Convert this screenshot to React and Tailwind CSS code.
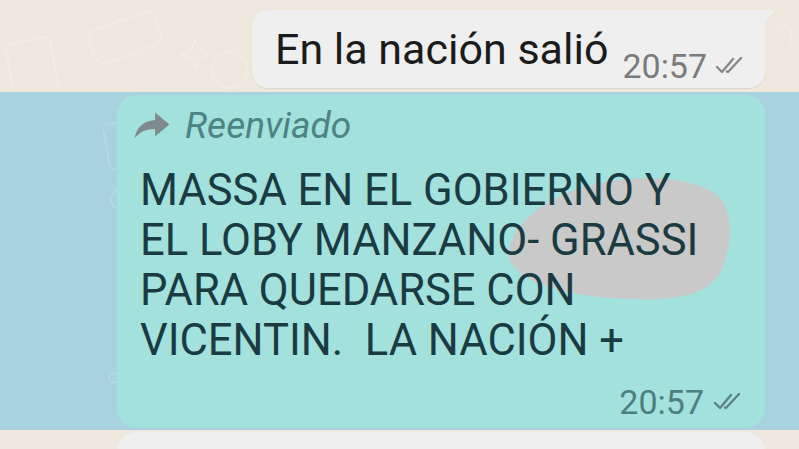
import React from 'react';

const Ticks = ({ className }) => (
  <svg viewBox="0 0 32 20" className={className} fill="none" stroke="currentColor" strokeWidth="2.4" strokeLinecap="round" strokeLinejoin="round">
    <path d="M2 11 L7 16 L18 3" />
    <path d="M12 15.5 L13 16 L26 2" />
  </svg>
);

const ForwardIcon = ({ className }) => (
  <svg viewBox="0 0 24 24" className={className} fill="currentColor">
    <path d="M14 8.2V3.5l9 7.5-9 7.5v-4.6c-5.6 0-9.4 1.7-13 5.6 1.2-6 5-10.7 13-11.3z" />
  </svg>
);

const Doodles = () => (
  <svg className="absolute inset-0 w-full h-full pointer-events-none" viewBox="0 0 799 449" fill="none" stroke="#ffffff" strokeOpacity="0.22" strokeWidth="1.5">
    <rect x="10" y="40" width="45" height="60" rx="6" transform="rotate(-10 32 70)" />
    <rect x="90" y="20" width="70" height="35" rx="10" transform="rotate(-20 125 37)" />
    <path d="M195 40 l4 10 l10 4 l-10 4 l-4 10 l-4 -10 l-10 -4 l10 -4 z" />
    <circle cx="230" cy="70" r="18" />
    <ellipse cx="60" cy="135" rx="45" ry="22" transform="rotate(-15 60 135)" />
    <circle cx="95" cy="165" r="5" />
    <circle cx="62" cy="190" r="4" />
    <rect x="30" y="210" width="65" height="45" rx="8" transform="rotate(-20 62 232)" />
    <circle cx="45" cy="275" r="4" />
    <circle cx="70" cy="300" r="5" />
    <path d="M55 340 c-8 -10 -20 -2 -12 8 l12 12 l12 -12 c8 -10 -4 -18 -12 -8 z" />
    <circle cx="20" cy="380" r="6" />
    <path d="M780 120 c-10 20 -10 60 0 80" />
    <circle cx="785" cy="320" r="8" />
    <path d="M775 30 c10 -10 20 0 15 15" />
  </svg>
);

export default function App() {
  return (
    <div className="relative w-[799px] h-[449px] overflow-hidden bg-[#efe7dd] font-['Roboto','Liberation_Sans',sans-serif]">
      <Doodles />

      {/* outgoing text bubble */}
      <div className="relative h-[92px] pt-[10px]">
        <div className="relative ml-[252px] w-[513px] h-[78px] bg-[#efefef] rounded-[16px] rounded-tr-none pl-[23px] pr-[20px] flex shadow-[0_1px_1px_rgba(0,0,0,0.08)]">
          <span className="mt-[14px] text-[43px] leading-[50px] text-[#1b1b1b] whitespace-nowrap">En la nación salió</span>
          <div className="ml-[14px] mt-[37px] flex items-center h-[38px]">
            <span className="text-[34px] leading-[38px] text-[#7b7b7b]">20:57</span>
            <Ticks className="ml-[8px] w-[32px] h-[20px] text-[#8a8a8a]" />
          </div>
          <svg className="absolute top-0 right-[-10px] w-[12px] h-[14px]" viewBox="0 0 12 14">
            <path d="M0 0 H12 L0 14 Z" fill="#efefef" />
          </svg>
        </div>
      </div>

      {/* selected forwarded message */}
      <div className="relative h-[338px] bg-[#a8d2df] pt-[3px]">
        <Doodles />
        <div className="relative ml-[117px] w-[648px] h-[333px] bg-[#a3e1dc] rounded-[20px] pl-[23px] pr-[20px] pt-[11px] pb-[10px] flex flex-col">
          <svg className="absolute left-0 top-0 w-full h-full" viewBox="0 0 648 333">
            <path
              d="M392 155 C398 122 440 96 483 88 C522 80 572 80 600 100 C618 116 616 152 602 180 C586 202 552 206 515 204 C480 203 450 199 420 188 C400 178 390 168 392 155 Z"
              fill="#c9c9c9"
            />
          </svg>
          <div className="relative flex items-center h-[40px]">
            <ForwardIcon className="w-[38px] h-[38px] text-[#7f8b8b] -ml-[7px]" />
            <span className="ml-[14px] text-[37px] leading-[40px] italic text-[#4e8383]">Reenviado</span>
          </div>
          <p className="relative mt-[20px] text-[43.5px] leading-[50px] text-[#1a3b42] whitespace-nowrap">
            MASSA EN EL GOBIERNO Y<br />
            EL LOBY MANZANO- GRASSI<br />
            PARA QUEDARSE CON<br />
            VICENTIN.&nbsp; LA NACIÓN +
          </p>
          <div className="relative mt-auto flex items-center justify-end h-[32px]">
            <span className="text-[34px] leading-[32px] text-[#4d7f80]">20:57</span>
            <Ticks className="ml-[9px] w-[32px] h-[20px] text-[#5a8485]" />
          </div>
        </div>
      </div>

      {/* next bubble peeking */}
      <div className="relative pt-[2px]">
        <div className="ml-[117px] w-[648px] h-[30px] bg-[#efefef] rounded-t-[20px]"></div>
      </div>
    </div>
  );
}
